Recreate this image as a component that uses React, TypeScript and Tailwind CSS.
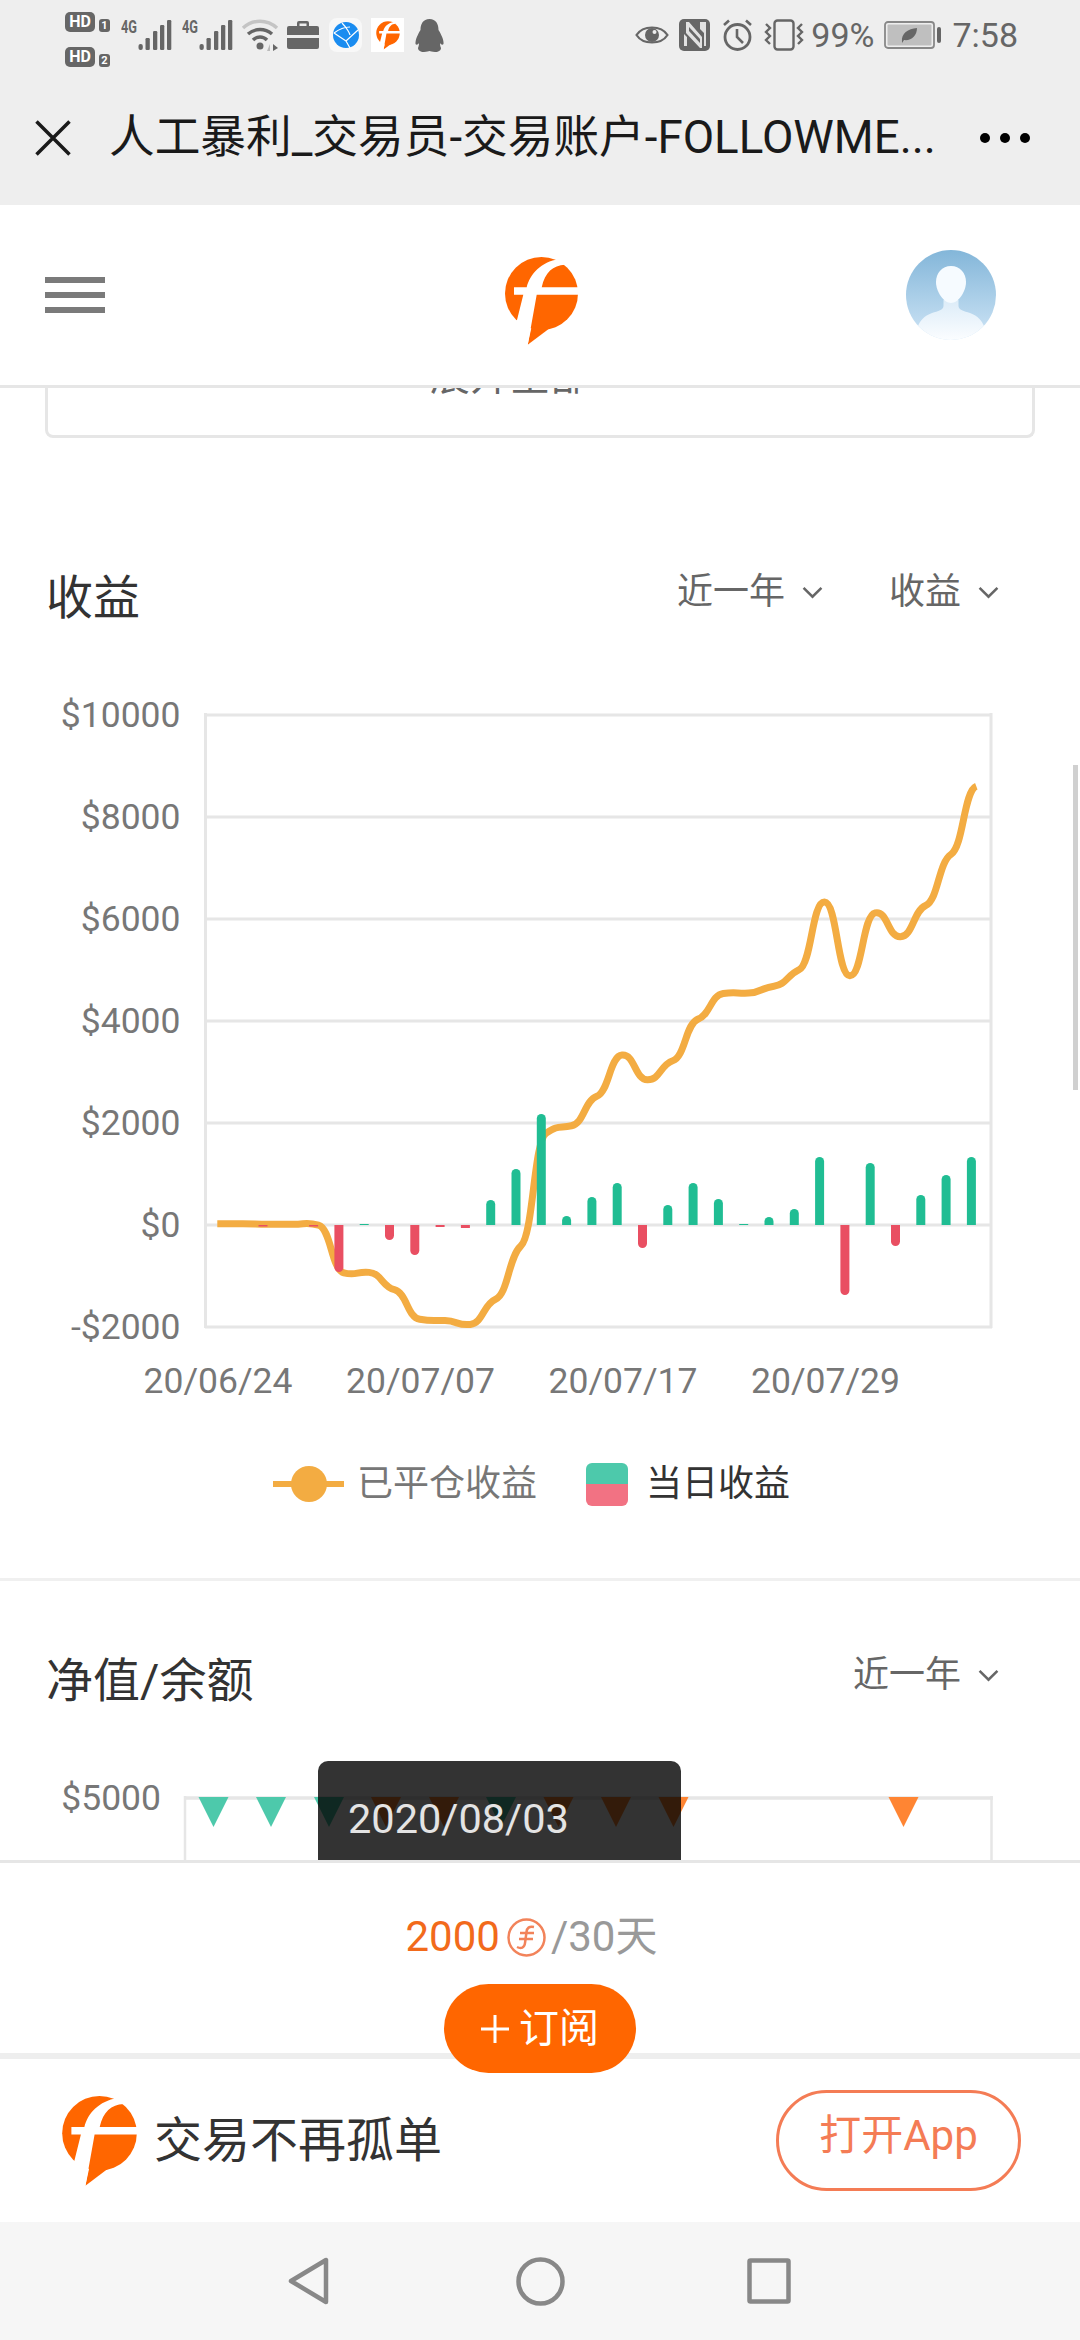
const FONT = "[font-family:Roboto,'Noto_Sans_CJK_SC',sans-serif]";

// chart samples read off the picture, in page pixels
const lineY = [
  1254, 1254, 1255, 1255, 1257, 1367, 1366, 1406, 1474, 1477, 1486, 1428, 1305, 1045, 1028, 960,
  865, 922, 878, 782, 723, 722, 706, 668, 512, 682, 537, 592, 520, 402, 245,
].map((v) => 680 + v / 2.306);

const bars = [
  -1.5, 0, -1.5, -47, 1, -15, -30, -2, -3, 25, 56, 111, 9, 28, 42, -23, 20, 42, 26, 1, 8, 16, 68,
  -70, 62, -21, 30, 50, 68,
];

const ZERO = 1225;

function smoothPath(points: [number, number][]) {
  // long, nearly flat handles: the curve has a small shoulder at every sample
  const dx = points[1][0] - points[0][0];
  const slope = (i: number) => {
    const prev = points[Math.max(i - 1, 0)];
    const next = points[Math.min(i + 1, points.length - 1)];
    return (next[1] - prev[1]) * 0.07;
  };
  let d = `M${points[0][0]} ${points[0][1]}`;
  for (let i = 1; i < points.length; i++) {
    const a = points[i - 1];
    const b = points[i];
    d += ` C${a[0] + dx * 0.5} ${a[1] + slope(i - 1)} ${b[0] - dx * 0.5} ${b[1] - slope(i)} ${b[0]} ${b[1]}`;
  }
  return d;
}

function barPath(x: number, h: number) {
  const w = 4.5;
  if (Math.abs(h) < 5) {
    return `M${x - w} ${ZERO} h${w * 2} v${-h} h${-w * 2} z`;
  }
  const dir = h > 0 ? -1 : 1;
  const end = ZERO + dir * Math.abs(h);
  return `M${x - w} ${ZERO} V${end - dir * w} A${w} ${w} 0 0 ${h > 0 ? 1 : 0} ${x + w} ${end - dir * w} V${ZERO} z`;
}

const Logo = ({ className }: { className: string }) => (
  <svg viewBox="0 0 73 90" className={className}>
    <circle cx="36.5" cy="37.5" r="36.5" fill="#ff6600" />
    <path d="M22.700 88.700 L30 55 L45 72 Z" fill="#ff6600" />
    <path
      d="M11 68 L18.300 38.700 H9 V31.300 H21.700 C25 18 36 6 54 3 L60 8.700 C48 9.500 40 16 36.700 31.300 H74 V38.700 H31.700 L22.700 89 L8 89 Z"
      fill="#fff"
    />
  </svg>
);

const Avatar = () => (
  <svg viewBox="0 0 90 90" className="w-[90px] h-[90px]">
    <defs>
      <linearGradient id="avatarBg" x1="0" y1="0" x2="0" y2="1">
        <stop offset="0" stopColor="#83b6d9" />
        <stop offset="1" stopColor="#cfe5f6" />
      </linearGradient>
      <linearGradient id="avatarBody" x1="0" y1="0" x2="0" y2="1">
        <stop offset="0" stopColor="#dcecf8" />
        <stop offset="1" stopColor="#fbfdff" />
      </linearGradient>
      <clipPath id="avatarClip">
        <circle cx="45" cy="45" r="45" />
      </clipPath>
    </defs>
    <g clipPath="url(#avatarClip)">
      <rect width="90" height="90" fill="url(#avatarBg)" />
      <path
        d="M37.500 50 H52.500 V56 C52.500 60 58 61 64 63 C72 66 76 71 78 76 V90 H12 V76 C14 71 18 66 26 63 C32 61 37.500 60 37.500 56 Z"
        fill="url(#avatarBody)"
      />
      <path
        d="M45 16 C54 16 60 23 60 32 C60 42 52 53 45 53 C38 53 30 42 30 32 C30 23 36 16 45 16 Z"
        fill="#f6fbff"
      />
    </g>
  </svg>
);

const Signal = () => (
  <svg viewBox="0 -6 51 38" className="-mt-[6px] w-[51px] h-[38px]">
    <text
      x="0"
      y="14"
      fontSize="18"
      fontWeight="700"
      fill="#666"
      fontFamily="Roboto"
      textLength="16"
      lengthAdjust="spacingAndGlyphs"
    >
      4G
    </text>
    <g fill="#666">
      <rect x="17.500" y="25" width="4.300" height="6" rx="2" />
      <rect x="24.500" y="19" width="4.300" height="12" rx="1.200" />
      <rect x="32" y="12" width="4.300" height="19" rx="1.200" />
      <rect x="39" y="6" width="4.300" height="25" rx="1.200" />
      <rect x="46" y="1" width="4.300" height="30" rx="1.200" />
    </g>
  </svg>
);

const StatusLeft = () => (
  <div className="flex items-center">
    <div className="flex flex-col gap-[15px] mt-[8px]">
      {["1", "2"].map((n) => (
        <div key={n} className="flex items-end gap-[4px]">
          <span className="w-[30px] h-[20px] rounded-[5px] bg-[#666] text-white text-[16px] font-bold leading-[20px] text-center">
            HD
          </span>
          <span className="w-[11px] h-[13px] rounded-[3px] bg-[#666] text-white text-[11px] font-bold leading-[13px] text-center">
            {n}
          </span>
        </div>
      ))}
    </div>
    <div className="ml-[11px]">
      <Signal />
    </div>
    <div className="ml-[10px]">
      <Signal />
    </div>
    {/* wifi */}
    <svg viewBox="0 0 38 32" className="ml-[8px] w-[38px] h-[32px]" fill="none">
      <path d="M2 9 C12 0 26 0 36 9" stroke="#c4c4c4" strokeWidth="3.5" />
      <path d="M7 15 C14 9 24 9 31 15" stroke="#666" strokeWidth="3.5" />
      <path d="M12 21 C16 17 22 17 26 21" stroke="#666" strokeWidth="3.5" />
      <circle cx="19" cy="27" r="3.5" fill="#666" />
      <path d="M26 32 L29 25 V32 Z" fill="#bbb" />
      <path d="M32 25 L37 29 L32 32 Z" fill="#666" />
    </svg>
    {/* briefcase */}
    <svg viewBox="0 0 32 28" className="ml-[8px] w-[32px] h-[28px]" fill="#666">
      <path d="M10 5 V2 Q10 0 12 0 H20 Q22 0 22 2 V5 H19.5 V2.5 H12.5 V5 Z" />
      <path d="M0 7 Q0 5 2 5 H30 Q32 5 32 7 V14 H0 Z" />
      <path d="M0 17 H32 V26 Q32 28 30 28 H2 Q0 28 0 26 Z" />
    </svg>
    {/* browser app */}
    <div className="ml-[10px] w-[33px] h-[34px] rounded-[8px] bg-[#f8f8f8] flex items-center justify-center">
      <svg viewBox="0 0 26 26" className="w-[26px] h-[26px]" fill="none">
        <circle cx="13" cy="13" r="13" fill="#1a8cf0" />
        <path d="M1 11 L13 19 L25 8 M13 19 L17 26 M9 1 C14 6 17 12 17 13 M1 11 C5 8 10 5 17 5" stroke="#fff" strokeWidth="1.2" />
      </svg>
    </div>
    {/* followme app */}
    <div className="ml-[9px] w-[33px] h-[34px] bg-white flex items-center justify-center">
      <Logo className="w-[24px] h-[29px]" />
    </div>
    {/* qq */}
    <svg viewBox="0 0 29 33" className="ml-[11px] w-[29px] h-[33px]" fill="#666">
      <path d="M14.5 0 C21 0 23.5 5 23.5 11 C26 15 29 21 28.5 25 C27.5 26.5 26 25.5 25 24 C25 26 25.5 28 26 29 C26 31 24 33 20 33 C17 33 15.5 32 14.5 32 C13.5 32 12 33 9 33 C5 33 3 31 3 29 C3.5 28 4 26 4 24 C3 25.5 1.500 26.500 .5 25 C0 21 3 15 5.500 11 C5.500 5 8 0 14.5 0 Z" />
    </svg>
  </div>
);

const StatusRight = () => (
  <div className="flex items-center">
    {/* eye */}
    <svg viewBox="0 0 34 26" className="w-[34px] h-[26px]" fill="none">
      <path d="M1.500 13 C8 3 26 3 32.500 13 C26 23 8 23 1.500 13 Z" stroke="#666" strokeWidth="2.200" />
      <circle cx="17" cy="13" r="7" fill="#666" />
      <circle cx="19.500" cy="10" r="2" fill="#eee" />
    </svg>
    {/* nfc */}
    <svg viewBox="0 0 31 32" className="ml-[10px] w-[31px] h-[32px]">
      <rect width="31" height="32" rx="5" fill="#666" />
      <path d="M7 3 H10 L23 18 V29 H21 L7 14 Z M5 5 V27 H8 V18 L5 15 Z M24 3 H27 V27 H25 V14 L21 10 V3 Z" fill="#eee" opacity="0.9" />
      <path d="M10 12 L21 24 V20 L10 8 Z" fill="#666" />
    </svg>
    {/* alarm */}
    <svg viewBox="0 0 31 32" className="ml-[12px] w-[31px] h-[32px]" fill="none" stroke="#666">
      <circle cx="15.500" cy="18" r="12.500" strokeWidth="2.800" />
      <path d="M15 10 V18 L21 24" strokeWidth="2.600" />
      <path d="M2 6 L7 1.500 M29 6 L24 1.500" strokeWidth="2.600" />
    </svg>
    {/* vibrate */}
    <svg viewBox="0 0 40 32" className="ml-[11px] w-[40px] h-[32px]" fill="none" stroke="#666" strokeWidth="2.400">
      <rect x="10.500" y="1.500" width="19" height="29" rx="3" />
      <path d="M2 5 L6 9 L2 13 L6 17 L2 21 L6 25" />
      <path d="M38 5 L34 9 L38 13 L34 17 L38 21 L34 25" />
    </svg>
    <span className="ml-[7px] text-[34px] leading-none text-[#666]">99%</span>
    {/* battery */}
    <svg viewBox="0 0 58 28" className="ml-[10px] w-[58px] h-[28px]" fill="none">
      <rect x="1" y="1" width="49" height="26" rx="3" stroke="#888" strokeWidth="1.800" />
      <rect x="3.500" y="3.500" width="44" height="21" rx="1" fill="#bfbfbf" />
      <rect x="53" y="6" width="4" height="16" rx="2" fill="#666" />
      <path d="M18 21 C17 12 24 8 33 7 C33 15 27 20 20 19 L18 22 Z" fill="#666" />
    </svg>
    <span className="ml-[10px] text-[34px] leading-none text-[#666]">7:58</span>
  </div>
);

const Dropdown = ({ label }: { label: string }) => (
  <div className="flex items-center text-[36px] leading-none text-[#666]">
    <span>{label}</span>
    <svg viewBox="0 0 20 12" className="ml-[17px] w-[21px] h-[13px]" fill="none" stroke="#666" strokeWidth="2.400">
      <path d="M1.500 1.500 L10 10 L18.500 1.500" />
    </svg>
  </div>
);

const ProfitChart = () => {
  const gridY = [715, 817, 919, 1021, 1123, 1225, 1327];
  const yLabels = ["$10000", "$8000", "$6000", "$4000", "$2000", "$0", "-$2000"];
  const xLabels: [string, number][] = [
    ["20/06/24", 218],
    ["20/07/07", 420.5],
    ["20/07/17", 623],
    ["20/07/29", 825.5],
  ];
  const pts = lineY.map((y, i) => [217.3 + 25.3 * i, y] as [number, number]);
  return (
    <svg viewBox="0 647 1080 773" className="block w-[1080px] h-[773px]">
      {gridY.map((y, i) => (
        <g key={y}>
          <line x1="205" x2="992" y1={y} y2={y} stroke="#e6e6e6" strokeWidth="3" />
          <text x="180.5" y={y + 12} textAnchor="end" fontSize="35.5" fill="#777">
            {yLabels[i]}
          </text>
        </g>
      ))}
      <line x1="205.500" x2="205.500" y1="713" y2="1328" stroke="#e6e6e6" strokeWidth="3" />
      <line x1="991" x2="991" y1="713" y2="1328" stroke="#e6e6e6" strokeWidth="3" />
      {xLabels.map(([t, x]) => (
        <text key={t} x={x} y="1393" textAnchor="middle" fontSize="35.5" fill="#777">
          {t}
        </text>
      ))}
      <path d={smoothPath(pts)} fill="none" stroke="#f3ac42" strokeWidth="7" />
      {bars.map((h, i) => (
        <path key={i} d={barPath(263 + 25.3 * i, h)} fill={h > 0 ? "#20bd93" : "#e94f62"} />
      ))}
    </svg>
  );
};

const EquityChart = () => {
  const marks: [number, string][] = [
    [213.5, "#4dc9ab"],
    [271, "#4dc9ab"],
    [329, "#4dc9ab"],
    [386, "#ff8533"],
    [444, "#ff8533"],
    [501, "#4dc9ab"],
    [558.5, "#ff8533"],
    [616, "#ff8533"],
    [673.5, "#ff8533"],
    [903.5, "#ff8533"],
  ];
  return (
    <div className="relative h-[130px] overflow-hidden">
      <svg viewBox="0 1730 1080 130" className="block w-[1080px] h-[130px]">
        <line x1="184" x2="993" y1="1798" y2="1798" stroke="#e6e6e6" strokeWidth="3.500" />
        <line x1="185" x2="185" y1="1796" y2="1860" stroke="#e6e6e6" strokeWidth="2.500" />
        <line x1="991.500" x2="991.500" y1="1796" y2="1860" stroke="#e6e6e6" strokeWidth="2.500" />
        <text x="161" y="1810" textAnchor="end" fontSize="35.5" fill="#777">
          $5000
        </text>
        {marks.map(([x, c]) => (
          <path key={x} d={`M${x - 15} 1797 H${x + 15} L${x} 1827 Z`} fill={c} />
        ))}
      </svg>
      <div className="absolute left-[318px] top-[31px] w-[363px] h-[110px] rounded-t-[10px] bg-black/80 pl-[30px] pt-[33px] text-[41.500px] leading-[50px] text-[#e4e4e4]">
        2020/08/03
      </div>
    </div>
  );
};

export default function App() {
  return (
    <div className={`relative w-[1080px] h-[2340px] overflow-hidden bg-white flex flex-col ${FONT}`}>
      {/* system bar + webview title */}
      <div className="h-[205px] shrink-0 bg-[#eeeeee]">
        <div className="h-[70px] pl-[65px] pr-[62px] flex items-center justify-between">
          <StatusLeft />
          <StatusRight />
        </div>
        <div className="h-[135px] pl-[35px] pr-[50px] flex items-center">
          <svg viewBox="0 0 36 36" className="w-[36px] h-[36px] shrink-0" fill="none" stroke="#1a1a1a" strokeWidth="3.500">
            <path d="M1.500 1.500 L34.500 34.500 M34.500 1.500 L1.500 34.500" />
          </svg>
          <div className="ml-[38px] w-[826px] whitespace-nowrap text-[45.700px] leading-none text-[#1a1a1a]">
            人工暴利_交易员-交易账户-FOLLOWME...
          </div>
          <div className="ml-auto flex gap-[10px]">
            <span className="w-[10px] h-[10px] rounded-full bg-black" />
            <span className="w-[10px] h-[10px] rounded-full bg-black" />
            <span className="w-[10px] h-[10px] rounded-full bg-black" />
          </div>
        </div>
      </div>

      {/* site header */}
      <div className="h-[183px] shrink-0 relative z-10 bg-white border-b-[3px] border-[#e6e6e6] pl-[45px] pr-[84px] flex items-center justify-between">
        <div className="flex flex-col gap-[9px]">
          <span className="w-[60px] h-[6px] bg-[#7a7a7a]" />
          <span className="w-[60px] h-[6px] bg-[#7a7a7a]" />
          <span className="w-[60px] h-[6px] bg-[#7a7a7a]" />
        </div>
        <Logo className="w-[73px] h-[90px] ml-[72px] mt-[12px]" />
        <Avatar />
      </div>

      {/* page content, scrolled */}
      <div className="relative flex-1 overflow-hidden">
        <div className="mx-[45px] -mt-[80px] h-[130px] rounded-b-[8px] border-x-[3px] border-b-[3px] border-[#e6e6e6] flex items-end justify-center pb-[38px] pr-[60px] text-[40px] leading-none text-[#666]">
          展开全部
        </div>

        <div className="mt-[109px] h-[100px] pl-[46px] pr-[81px] flex items-center justify-between">
          <span className="text-[47px] leading-none text-[#333]">收益</span>
          <div className="flex gap-[66px] mb-[10px]">
            <Dropdown label="近一年" />
            <Dropdown label="收益" />
          </div>
        </div>
        <ProfitChart />

        <div className="mt-[34px] h-[60px] pl-[273px] flex items-center text-[36px] leading-none">
          <div className="relative w-[71px] h-[36px] flex items-center justify-center">
            <span className="w-full h-[6px] bg-[#f3ac42]" />
            <span className="absolute w-[36px] h-[36px] rounded-full bg-[#f3ac42]" />
          </div>
          <span className="ml-[13px] text-[#777]">已平仓收益</span>
          <div className="ml-[49px] w-[42px] h-[43px] rounded-[6px] overflow-hidden">
            <div className="h-1/2 bg-[#4dc9ab]" />
            <div className="h-1/2 bg-[#f27283]" />
          </div>
          <span className="ml-[18px] text-[#333]">当日收益</span>
        </div>

        <div className="mt-[64px] h-[3px] bg-[#f0f0f0]" />

        <div className="mt-[49px] h-[100px] pl-[46px] pr-[81px] flex items-center justify-between">
          <span className="text-[47px] leading-none text-[#333]">净值/余额</span>
          <div className="mb-[10px]">
            <Dropdown label="近一年" />
          </div>
        </div>
        <EquityChart />

        {/* page scrollbar */}
        <div className="absolute right-[2px] top-[377px] w-[5px] h-[325px] bg-[#d0d0d0]" />
      </div>

      {/* subscribe bar */}
      <div className="h-[193px] shrink-0 bg-white border-t-[3px] border-[#e6e6e6] flex flex-col items-center">
        <div className="mt-[49px] mr-[17px] h-[50px] shrink-0 flex items-center text-[42px] leading-none">
          <span className="text-[#f26a1b]">2000</span>
          <svg viewBox="0 0 39 39" className="ml-[7px] w-[39px] h-[39px]" fill="none" stroke="#f2835a" strokeWidth="2.500">
            <circle cx="19.500" cy="19.500" r="18" />
            <path d="M27 9 C22 8 20 10 19.500 14 L18 25 C17.500 30 14 31 10 29" />
            <path d="M13 15 H27 M12 21 H26" />
          </svg>
          <span className="ml-[5px] text-[#999]">/30天</span>
        </div>
        <button className="relative z-10 mt-[22px] w-[192px] h-[89px] shrink-0 rounded-full bg-[#ff6600] flex items-center justify-center text-white text-[40px] leading-none">
          <svg viewBox="0 0 28 28" className="mr-[10px] w-[28px] h-[28px]" fill="none" stroke="#fff" strokeWidth="3">
            <path d="M0 14 H28 M14 0 V28" />
          </svg>
          订阅
        </button>
      </div>
      <div className="h-[6px] shrink-0 bg-[#eeeeee]" />

      {/* open app banner */}
      <div className="h-[163px] shrink-0 bg-white pl-[61px] pr-[59px] flex items-center">
        <Logo className="w-[77px] h-[92px]" />
        <span className="ml-[16px] text-[48px] leading-none text-[#333]">交易不再孤单</span>
        <div className="ml-auto w-[245px] h-[101px] rounded-full border-[3px] border-[#f47c55] flex items-center justify-center pb-[10px] text-[42px] leading-none text-[#f47c55]">
          打开App
        </div>
      </div>

      {/* android nav */}
      <div className="h-[118px] shrink-0 bg-[#f6f6f6] pl-[288px] flex items-center">
        <svg viewBox="0 0 41 48" className="w-[41px] h-[48px]" fill="none" stroke="#888" strokeWidth="4.500" strokeLinejoin="round">
          <path d="M38 3 V45 L3 24 Z" />
        </svg>
        <svg viewBox="0 0 49 49" className="ml-[187px] w-[49px] h-[49px]" fill="none" stroke="#888" strokeWidth="4.500">
          <circle cx="24.500" cy="24.500" r="22" />
        </svg>
        <svg viewBox="0 0 44 46" className="ml-[182px] w-[44px] h-[46px]" fill="none" stroke="#888" strokeWidth="4.500" strokeLinejoin="round">
          <rect x="2.500" y="2.500" width="39" height="41" rx="1" />
        </svg>
      </div>
    </div>
  );
}
